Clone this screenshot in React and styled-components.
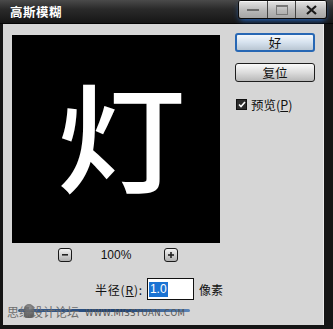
import React from "react";
import styled, { createGlobalStyle } from "styled-components";

const Global = createGlobalStyle`
  html, body { margin: 0; padding: 0; background: #111; }
  body { font-family: "Liberation Sans", "Noto Sans CJK SC", sans-serif; }
`;

const cjk = `"Noto Sans CJK SC", "Liberation Sans", sans-serif`;

const Window = styled.div`
  width: 333px;
  height: 329px;
  display: flex;
  flex-direction: column;
  background: #0e0e0e;
  position: relative;
  overflow: hidden;
`;

const TitleBar = styled.div`
  height: 24px;
  display: flex;
  align-items: center;
  justify-content: space-between;
  padding: 0 6px 0 10px;
  background: linear-gradient(#4a4a4a 0%, #2a2a2a 40%, #161616 100%);
  border-bottom: 1px solid #050505;
  box-sizing: border-box;
`;

const Title = styled.div`
  color: #fff;
  font-family: ${cjk};
  font-weight: 700;
  font-size: 12.5px;
  letter-spacing: 0.5px;
  margin-top: -1px;
`;

const WinButtons = styled.div`
  display: flex;
  height: 17px;
  margin-top: -4px;
  border: 1px solid #0a0a0a;
  border-radius: 3px;
  box-shadow: 0 3px 6px -2px rgba(40, 120, 230, 0.9);
  overflow: hidden;
`;

const WinButton = styled.div`
  width: ${(p) => p.$w}px;
  display: flex;
  align-items: center;
  justify-content: center;
  background: linear-gradient(#e6e6e6, #b9b9b9 55%, #a4a4a4);
  border-left: ${(p) => (p.$first ? "none" : "1px solid #444")};
  box-shadow: inset 0 1px 0 #f6f6f6;
`;

const Body = styled.div`
  flex: 1;
  display: flex;
  background: #d6d6d6;
  border-left: 3px solid #151515;
  border-right: 9px solid #151515;
  border-bottom: 4px solid #151515;
  box-shadow: inset -1px 0 0 #ececec;
`;

const LeftCol = styled.div`
  width: 220px;
  padding: 11px 0 0 9px;
  box-sizing: border-box;
  display: flex;
  flex-direction: column;
`;

const Preview = styled.div`
  width: 208px;
  height: 208px;
  background: #000;
  display: flex;
  align-items: center;
  justify-content: center;
  overflow: hidden;
`;

const Glyph = styled.span`
  color: #fff;
  font-family: ${cjk};
  font-size: 118px;
  font-weight: 500;
  line-height: 1;
  transform: translate(5px, -6px) scaleX(1.1);
`;

const ZoomRow = styled.div`
  display: flex;
  align-items: center;
  margin-top: 5px;
  padding-left: 46px;
  height: 14px;
`;

const ZoomBtn = styled.div`
  width: 12px;
  height: 12px;
  border: 1px solid #1a1a1a;
  border-radius: 3px;
  background: linear-gradient(#f2f2f2, #b0b0b0);
  display: flex;
  align-items: center;
  justify-content: center;
`;

const ZoomLabel = styled.div`
  width: 92px;
  text-align: center;
  font-size: 12px;
  color: #111;
  padding-right: 4px;
  box-sizing: border-box;
`;

const RadiusRow = styled.div`
  display: flex;
  align-items: center;
  margin-top: 16px;
  padding-left: 83px;
  gap: 4px;
  font-family: ${cjk};
  font-size: 12px;
  color: #111;
  white-space: nowrap;
`;

const Label = styled.span`
  letter-spacing: 0.8px;
`;

const Underline = styled.span`
  text-decoration: underline;
`;

const Input = styled.div`
  width: 55px;
  height: 20px;
  background: #fff;
  border: 1px solid #111;
  display: flex;
  align-items: center;
  padding-left: 1px;
  margin-right: 1px;
`;

const Selected = styled.span`
  background: #1b73d3;
  color: #fff;
  font-family: "Liberation Sans", sans-serif;
  font-size: 12px;
  line-height: 15px;
  padding: 0 1px;
`;

const RightCol = styled.div`
  flex: 1;
  padding: 9px 0 0 12px;
  display: flex;
  flex-direction: column;
`;

const Button = styled.div`
  width: 80px;
  height: 19px;
  box-sizing: border-box;
  border-radius: 3px;
  border: ${(p) => (p.$default ? "2px solid #2767b4" : "1px solid #1e1e1e")};
  background: ${(p) =>
    p.$default
      ? "linear-gradient(#f4f8fc, #d6e2ee 50%, #b9c6d2)"
      : "linear-gradient(#fafafa, #dcdcdc 50%, #b8b8b8)"};
  display: flex;
  align-items: center;
  justify-content: center;
  font-family: ${cjk};
  font-size: 12.5px;
  color: #111;
  margin-bottom: ${(p) => p.$mb}px;
`;

const CheckRow = styled.div`
  display: flex;
  align-items: center;
  gap: 4px;
  margin-left: 1px;
  font-family: ${cjk};
  font-size: 12.5px;
  color: #111;
`;

const CheckBox = styled.div`
  width: 9px;
  height: 9px;
  border: 1px solid #111;
  background: #2c2c2c;
  display: flex;
  align-items: center;
  justify-content: center;
`;

const Watermark = styled.div`
  position: absolute;
  left: 7px;
  top: 303px;
  display: flex;
  align-items: center;
  gap: 6px;
`;

const WmLine = styled.div`
  position: absolute;
  left: 18px;
  top: 309px;
  width: 172px;
  height: 3px;
  border-radius: 2px;
  background: linear-gradient(90deg, #3d5f8c, #1d4478 60%, #5a85b8);
`;

const WmCn = styled.div`
  font-family: ${cjk};
  font-size: 12px;
  color: #6d6d6d;
  position: relative;
`;

const WmEn = styled.div`
  font-family: "DejaVu Sans", sans-serif;
  font-size: 8.5px;
  color: #555;
  letter-spacing: 0.4px;
  position: relative;
  margin-top: 3px;
`;

const WmFigure = styled.div`
  position: absolute;
  left: 17px;
  top: 1px;
  width: 10px;
  height: 14px;
  border-radius: 5px 5px 3px 3px;
  background: radial-gradient(circle at 50% 30%, #8a8a8a, #4a4a4a 70%);
  opacity: 0.85;
`;

export default function App() {
  return (
    <>
      <Global />
      <Window>
        <TitleBar>
          <Title>高斯模糊</Title>
          <WinButtons>
            <WinButton $w={28} $first>
              <svg width="12" height="4" viewBox="0 0 12 4">
                <rect x="0" y="1" width="12" height="2" fill="#6a6a6a" />
              </svg>
            </WinButton>
            <WinButton $w={27}>
              <svg width="12" height="10" viewBox="0 0 12 10">
                <rect x="0.5" y="0.5" width="11" height="9" fill="none" stroke="#777" />
                <rect x="0.5" y="0.5" width="11" height="1.5" fill="#777" />
              </svg>
            </WinButton>
            <WinButton $w={30}>
              <svg width="11" height="10" viewBox="0 0 11 10">
                <path d="M1 1 L10 9 M10 1 L1 9" stroke="#1a1a1a" strokeWidth="2.2" />
              </svg>
            </WinButton>
          </WinButtons>
        </TitleBar>
        <Body>
          <LeftCol>
            <Preview>
              <Glyph>灯</Glyph>
            </Preview>
            <ZoomRow>
              <ZoomBtn>
                <svg width="6" height="2" viewBox="0 0 6 2">
                  <rect width="6" height="1.6" fill="#222" />
                </svg>
              </ZoomBtn>
              <ZoomLabel>100%</ZoomLabel>
              <ZoomBtn>
                <svg width="6" height="6" viewBox="0 0 6 6">
                  <rect y="2.2" width="6" height="1.6" fill="#222" />
                  <rect x="2.2" width="1.6" height="6" fill="#222" />
                </svg>
              </ZoomBtn>
            </ZoomRow>
            <RadiusRow>
              <Label>
                半径(<Underline>R</Underline>):
              </Label>
              <Input>
                <Selected>1.0</Selected>
              </Input>
              <span>像素</span>
            </RadiusRow>
          </LeftCol>
          <RightCol>
            <Button $default $mb={11}>好</Button>
            <Button $mb={13}>复位</Button>
            <CheckRow>
              <CheckBox>
                <svg width="8" height="7" viewBox="0 0 8 7">
                  <path d="M1 3.5 L3 5.5 L7 1" fill="none" stroke="#fff" strokeWidth="1.6" />
                </svg>
              </CheckBox>
              <span>
                预览(<Underline>P</Underline>)
              </span>
            </CheckRow>
          </RightCol>
        </Body>
        <WmLine />
        <Watermark>
          <WmFigure />
          <WmCn>思缘设计论坛</WmCn>
          <WmEn>WWW.MISSYUAN.COM</WmEn>
        </Watermark>
      </Window>
    </>
  );
}
